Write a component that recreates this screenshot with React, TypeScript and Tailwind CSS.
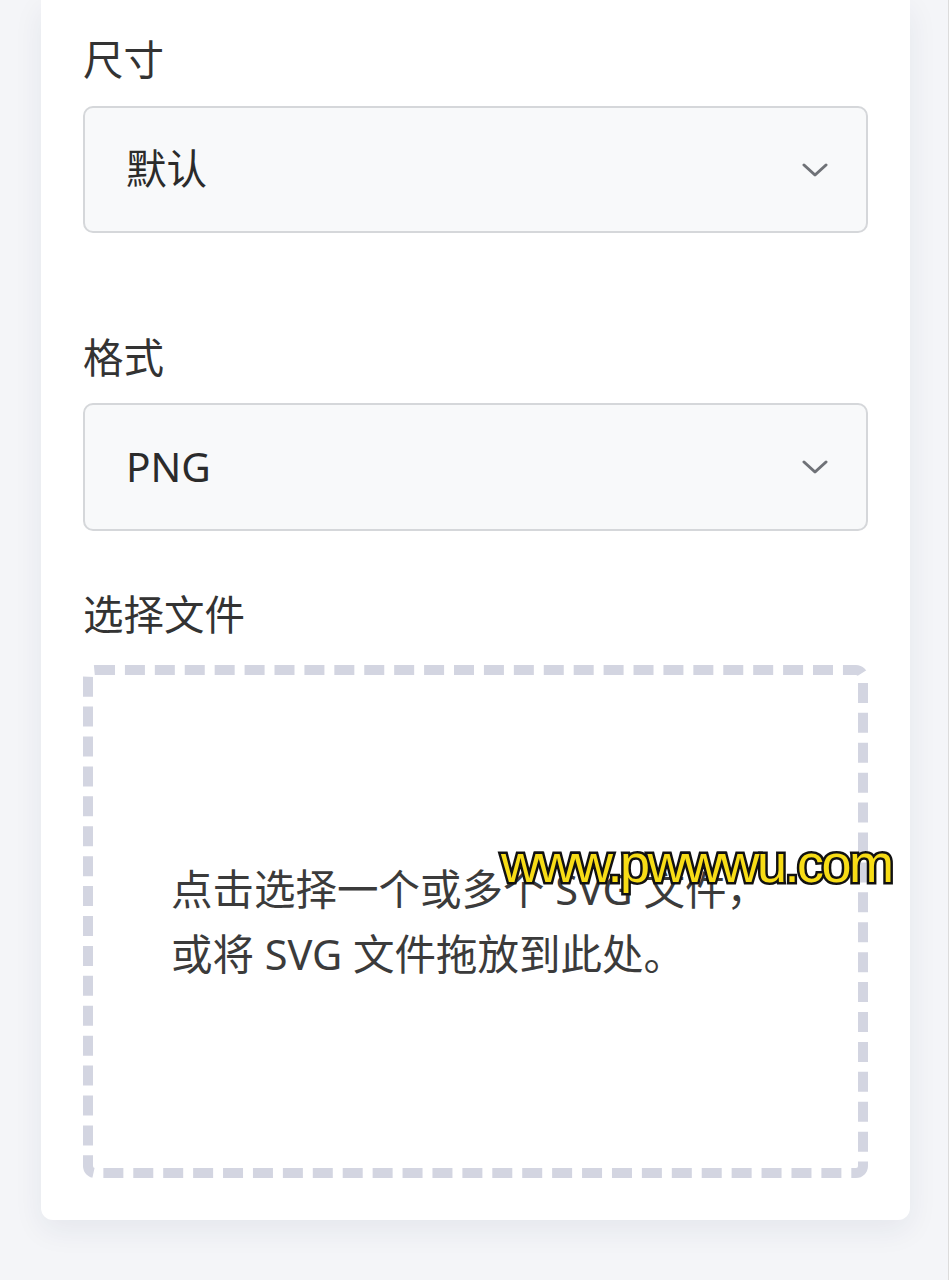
import React from "react";

const font = { fontFamily: '"Noto Sans", "Noto Sans CJK SC", sans-serif' };

function Chevron() {
  return (
    <svg width="26" height="14" viewBox="0 0 26 14" fill="none" className="shrink-0">
      <polyline points="2,2 13,12 24,2" stroke="#6f7277" strokeWidth="3" strokeLinecap="round" strokeLinejoin="round" />
    </svg>
  );
}

function SelectBox({ value, height }: { value: string; height: string }) {
  return (
    <div
      className={`flex items-center justify-between rounded-[10px] border-2 border-[#d5d7da] bg-[#f8f9fa] pl-[41px] pr-[38px] ${height}`}
    >
      <span className="text-[40.5px] text-[#2b2b2b]">{value}</span>
      <Chevron />
    </div>
  );
}

export default function App() {
  return (
    <div className="relative min-h-[1280px] border-r border-[#dcdcdc] bg-[#f4f5f8]" style={font}>
      <div className="ml-[41px] w-[869px] rounded-b-[12px] bg-white px-[42px] pb-[42px] pt-[32px] shadow-[0_10px_30px_rgba(30,40,80,0.07)]">
        <div className="h-[56px] text-[40.5px] leading-[56px] text-[#333]">尺寸</div>
        <div className="mt-[18px]">
          <SelectBox value="默认" height="h-[127px]" />
        </div>

        <div className="mt-[97px] h-[56px] text-[40.5px] leading-[56px] text-[#333]">格式</div>
        <div className="mt-[17px]">
          <SelectBox value="PNG" height="h-[128px]" />
        </div>

        <div className="mt-[56px] h-[56px] text-[40.5px] leading-[56px] text-[#333]">选择文件</div>
        <div className="mt-[22px] flex h-[513px] items-center rounded-[12px] border-[10px] border-dashed border-[#d3d5e1] pl-[78px]">
          <p className="text-[41.5px] leading-[65px] text-[#3b3b3b]">
            点击选择一个或多个 SVG 文件，
            <br />
            或将 SVG 文件拖放到此处。
          </p>
        </div>
      </div>

      <div
        className="absolute left-[501px] top-[836px] text-[54px] leading-none tracking-[-2.5px] text-[#f7dc16]"
        style={{
          fontFamily: '"Liberation Sans", Arial, sans-serif',
          WebkitTextStroke: "5px #111",
          paintOrder: "stroke fill",
        }}
      >
        www.pwwwu.com
      </div>
    </div>
  );
}
